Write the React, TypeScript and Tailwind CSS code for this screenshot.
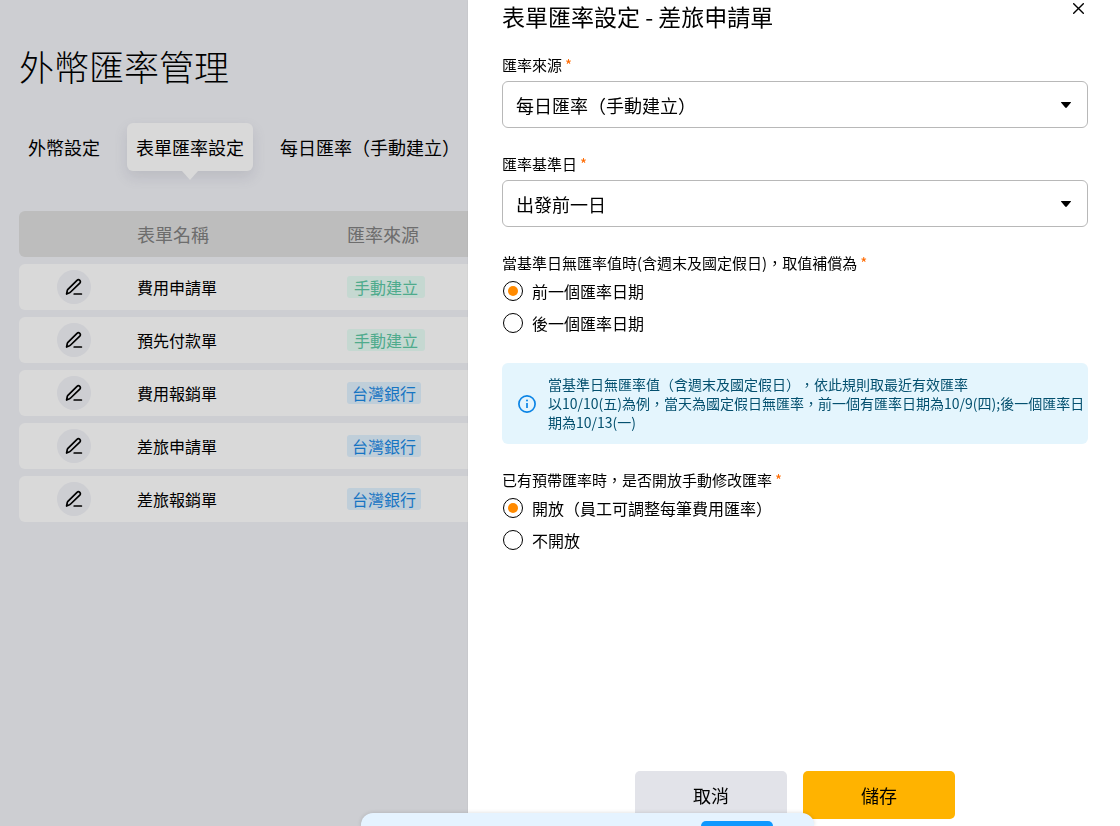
import React, { useState } from "react";

type SourceKind = "manual" | "bank";

interface FormRate {
  name: string;
  source: string;
  kind: SourceKind;
}

const tabs = ["外幣設定", "表單匯率設定", "每日匯率（手動建立）"];

const formRates: FormRate[] = [
  { name: "費用申請單", source: "手動建立", kind: "manual" },
  { name: "預先付款單", source: "手動建立", kind: "manual" },
  { name: "費用報銷單", source: "台灣銀行", kind: "bank" },
  { name: "差旅申請單", source: "台灣銀行", kind: "bank" },
  { name: "差旅報銷單", source: "台灣銀行", kind: "bank" },
];

const badgeStyles: Record<SourceKind, string> = {
  manual: "px-[7px] bg-[#e8fef6] text-[#5cc9a5]",
  bank: "px-[5px] bg-[#e1f2ff] text-[#1b8ae6]",
};

function PenIcon() {
  return (
    <svg viewBox="0 0 18 18" className="h-[18px] w-[18px]" fill="none" stroke="currentColor" strokeWidth="1.7" strokeLinecap="round" strokeLinejoin="round" aria-hidden="true">
      <path d="M1.6 16l.7-3.6c.1-.4.3-.8.6-1.1L12 2.3c.8-.8 2-.8 2.8 0s.8 2 0 2.8l-9.2 8.9c-.3.3-.7.6-1.1.8L1.6 16z" />
      <path d="M9.2 16h7.2" />
    </svg>
  );
}

function Required() {
  return <span className="ml-[3px] text-[#ff6a00]">*</span>;
}

interface SelectFieldProps {
  id: string;
  label: string;
  options: string[];
}

function SelectField({ id, label, options }: SelectFieldProps) {
  return (
    <div className="flex flex-col gap-1.5">
      <label htmlFor={id} className="text-[15px] leading-5">
        {label}
        <Required />
      </label>
      <div className="relative">
        <select
          id={id}
          className="block h-[47px] w-full appearance-none rounded-md border border-[#b8b8b8] bg-white pr-10 pl-[13px] text-lg outline-none focus:border-[#ffb300]"
        >
          {options.map((option) => (
            <option key={option}>{option}</option>
          ))}
        </select>
        <svg viewBox="0 0 10 6" className="pointer-events-none absolute top-[21px] right-[17px] h-1.5 w-2.5" aria-hidden="true">
          <path d="M.5 0h9c.5 0 .6.4.3.7L5.8 5.5c-.4.6-1.2.6-1.6 0L.2.7C-.1.4 0 0 .5 0z" fill="#000" />
        </svg>
      </div>
    </div>
  );
}

interface RadioFieldProps {
  name: string;
  label: string;
  options: string[];
}

function RadioField({ name, label, options }: RadioFieldProps) {
  const [value, setValue] = useState(options[0]);

  return (
    <fieldset>
      <legend className="mb-1.5 text-[15px] leading-5">
        {label}
        <Required />
      </legend>
      <div className="flex flex-col items-start gap-2">
        {options.map((option) => (
          <label key={option} className="flex h-6 cursor-pointer items-center gap-[9px] pl-px text-base">
            <input
              type="radio"
              name={name}
              checked={value === option}
              onChange={() => setValue(option)}
              className="grid h-5 w-5 appearance-none place-content-center rounded-full border border-black before:h-2.5 before:w-2.5 before:rounded-full checked:before:bg-[#ff8a00]"
            />
            {option}
          </label>
        ))}
      </div>
    </fieldset>
  );
}

function RateListPage() {
  return (
    <main className="px-[19px] pt-[41px]">
      <h1 className="text-[35px] leading-[50px] font-light">外幣匯率管理</h1>

      {/* Tabs */}
      <nav className="mt-8 flex gap-[18px]">
        {tabs.map((tab) => (
          <button
            key={tab}
            className={
              tab === "表單匯率設定"
                ? "relative h-12 rounded-md bg-white px-[9px] text-lg whitespace-nowrap shadow-[0_6px_14px_rgba(90,95,120,0.14)]"
                : "h-12 px-[9px] text-lg whitespace-nowrap"
            }
          >
            {tab}
            {tab === "表單匯率設定" && (
              <span className="absolute top-full left-1/2 -translate-x-1/2 border-x-8 border-t-[9px] border-x-transparent border-t-white" />
            )}
          </button>
        ))}
      </nav>

      {/* Forms */}
      <table className="mt-[33px] w-full table-fixed border-separate border-spacing-x-0 border-spacing-y-[7px] text-left">
        <colgroup>
          <col className="w-[118px]" />
          <col className="w-[210px]" />
          <col />
        </colgroup>
        <thead>
          <tr className="h-[46px] text-lg text-[#808080]">
            <td className="rounded-l-md bg-[#dedede]" />
            <th className="bg-[#dedede] font-normal">表單名稱</th>
            <th className="rounded-r-md bg-[#dedede] font-normal">匯率來源</th>
          </tr>
        </thead>
        <tbody>
          {formRates.map((row) => (
            <tr key={row.name} className="h-[46px] text-base">
              <td className="rounded-l-md bg-white pl-[38px]">
                <button aria-label={`編輯${row.name}`} className="flex h-[34px] w-[34px] items-center justify-center rounded-full bg-[#f1f2f7]">
                  <PenIcon />
                </button>
              </td>
              <td className="bg-white">{row.name}</td>
              <td className="rounded-r-md bg-white">
                <div className={`w-fit rounded-[3px] leading-[22px] ${badgeStyles[row.kind]}`}>
                  {row.source}
                </div>
              </td>
            </tr>
          ))}
        </tbody>
      </table>
    </main>
  );
}

function RateDrawer() {
  return (
    <aside className="fixed inset-y-0 right-0 flex w-[652px] max-w-full flex-col bg-white px-8 pb-[7px] pl-[34px] shadow-[0_0_2px_rgba(0,0,0,0.08)]">
      <header className="flex items-start justify-between">
        <h2 className="text-[23px] leading-8">表單匯率設定 - 差旅申請單</h2>
        <button aria-label="關閉" className="p-1 pt-[3px]">
          <svg viewBox="0 0 11 11" className="h-[11px] w-[11px]" fill="none" stroke="#000" strokeWidth="1.4" strokeLinecap="round" aria-hidden="true">
            <path d="M.7.7l9.6 9.6M10.3.7L.7 10.3" />
          </svg>
        </button>
      </header>

      <div className="mt-[23px] flex flex-col gap-[26px]">
        <SelectField id="rate-source" label="匯率來源" options={["每日匯率（手動建立）", "台灣銀行"]} />
        <SelectField id="base-date" label="匯率基準日" options={["出發前一日"]} />
        <RadioField
          name="fallback"
          label="當基準日無匯率值時(含週末及國定假日)，取值補償為"
          options={["前一個匯率日期", "後一個匯率日期"]}
        />

        {/* Hint */}
        <div className="mt-0.5 flex items-center gap-3 rounded-md bg-[#e4f5fd] py-3 pr-0.5 pl-4 text-sm leading-[19px] text-[#04506f] [text-spacing-trim:space-all]">
          <svg viewBox="0 0 18 18" className="h-[18px] w-[18px] shrink-0" fill="none" stroke="#0b84e5" aria-hidden="true">
            <circle cx="9" cy="9" r="8.1" strokeWidth="1.7" />
            <path d="M9 8v5" strokeWidth="1.7" />
            <circle cx="9" cy="5.5" r="1" fill="#0b84e5" stroke="none" />
          </svg>
          <p>
            當基準日無匯率值（含週末及國定假日），依此規則取最近有效匯率
            <br />
            以10/10(五)為例，當天為國定假日無匯率，前一個有匯率日期為10/9(四);後一個匯率日期為10/13(一)
          </p>
        </div>

        <RadioField
          name="editable"
          label="已有預帶匯率時，是否開放手動修改匯率"
          options={["開放（員工可調整每筆費用匯率）", "不開放"]}
        />
      </div>

      <footer className="mt-auto flex justify-center gap-4">
        <button className="h-12 w-[152px] rounded-[5px] bg-[#e2e3e9] text-lg">取消</button>
        <button className="h-12 w-[152px] rounded-[5px] bg-[#ffb300] text-lg">儲存</button>
      </footer>
    </aside>
  );
}

export default function App() {
  return (
    <div className="min-h-screen bg-[#f1f2f7] font-['Noto_Sans_CJK_TC',sans-serif] text-black">
      <RateListPage />
      <div className="fixed inset-0 bg-black/15" />
      <RateDrawer />

      {/* Notice sliding in from the bottom edge */}
      <div className="fixed bottom-0 left-[361px] flex h-[13px] w-[453px] items-end justify-end rounded-t-xl bg-[#e5f3ff] pr-[41px] shadow-[0_0_4px_rgba(0,0,0,0.15)]">
        <div className="h-[5px] w-[72px] rounded-t-[5px] bg-[#0f98ff]" />
      </div>
    </div>
  );
}
